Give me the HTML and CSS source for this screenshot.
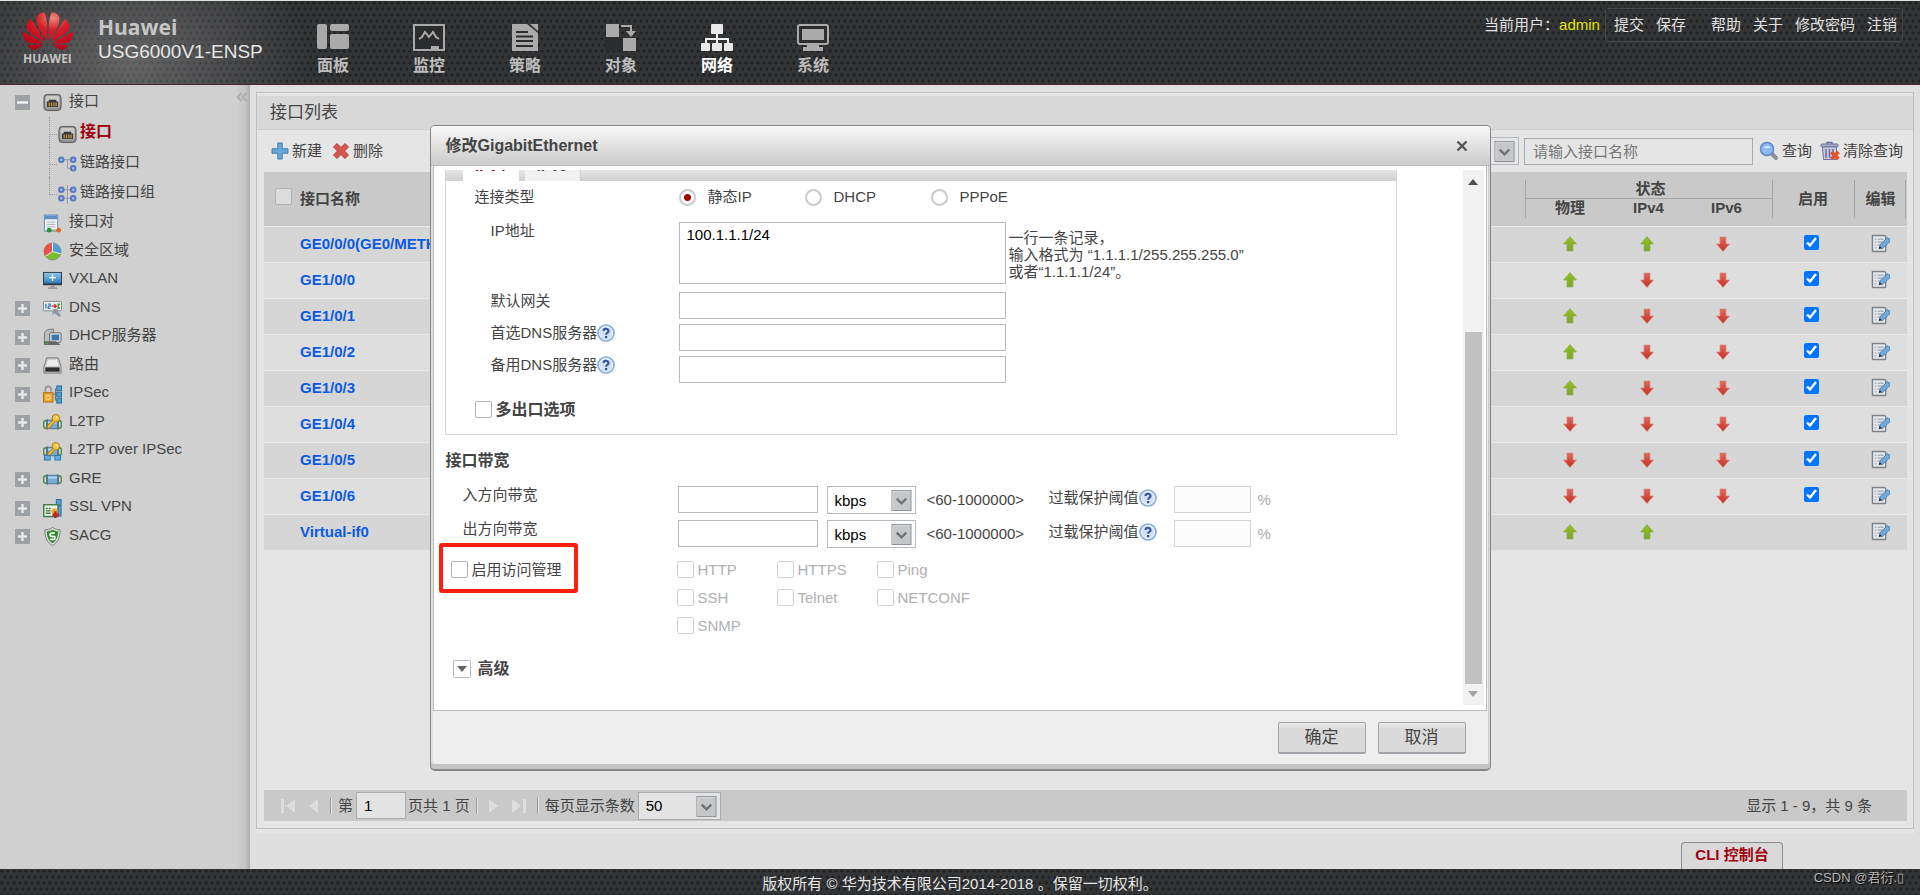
FILE: index.html
```html
<!DOCTYPE html>
<html lang="zh-CN">
<head>
<meta charset="utf-8">
<title>USG6000V1-ENSP</title>
<link rel="stylesheet" href="styles.css">
</head>
<body>
<svg class="defs" aria-hidden="true">
  <defs>
    <linearGradient id="g-blue" x1="0" y1="0" x2="0" y2="1"><stop offset="0" stop-color="#8ec3e6"/><stop offset="1" stop-color="#2f7dbb"/></linearGradient>
    <linearGradient id="g-green" x1="0" y1="0" x2="0" y2="1"><stop offset="0" stop-color="#8fc31f"/><stop offset="1" stop-color="#7aa82a"/></linearGradient>
    <linearGradient id="g-red" x1="0" y1="0" x2="0" y2="1"><stop offset="0" stop-color="#e06a5c"/><stop offset="1" stop-color="#c42f26"/></linearGradient>
    <radialGradient id="g-logo" cx=".6" cy=".15" r=".9"><stop offset="0" stop-color="#f0897a"/><stop offset=".35" stop-color="#d8202a"/><stop offset="1" stop-color="#b50016"/></radialGradient>
  </defs>
  <symbol id="i-port" viewBox="0 0 20 20"><rect x="1" y="1.500" width="18" height="17" rx="3.500" fill="#8b8b8b" stroke="#5b5b5b"/><rect x="2.500" y="3" width="15" height="13" rx="2.500" fill="#c9c9c9"/><path d="M4 15V9h2V7h8v2h2v6z" fill="#3a3835"/><path d="M6.500 10v4M9 10v4M11.500 10v4M13.800 10v4" stroke="#c9a23a" stroke-width="1.300"/></symbol>
  <symbol id="i-link" viewBox="0 0 20 20"><path d="M6 5h8M10 5v9h4" fill="none" stroke="#999"/><g fill="#a9b9e8" stroke="#5b74c4" stroke-width="2"><circle cx="3.500" cy="5" r="2.400"/><circle cx="16" cy="5" r="2.400"/><circle cx="16" cy="14" r="2.400"/></g></symbol>
  <symbol id="i-linkgroup" viewBox="0 0 20 20"><path d="M6 5h8M6 14h8M10 0v20" fill="none" stroke="#999"/><g fill="#a9b9e8" stroke="#5b74c4" stroke-width="2"><circle cx="3.500" cy="5" r="2.400"/><circle cx="16" cy="5" r="2.400"/><circle cx="3.500" cy="14" r="2.400"/><circle cx="16" cy="14" r="2.400"/></g></symbol>
  <symbol id="i-pair" viewBox="0 0 20 20"><rect x="1.500" y="1" width="14" height="17" fill="#f0f2f5" stroke="#6d8ab0"/><rect x="2" y="1.500" width="13" height="4" fill="#5f8fc9"/><path d="M4 8.500h9M4 11h9M4 13.500h9" stroke="#aab4c0"/><path d="M7 17h9" stroke="#888"/><circle cx="6.500" cy="17" r="2.500" fill="#1e9a2e"/><circle cx="16.500" cy="17" r="2.500" fill="#e0661a"/></symbol>
  <symbol id="i-zone" viewBox="0 0 20 20"><circle cx="10" cy="10" r="9" fill="#79bd2c" stroke="#777" stroke-width=".6"/><path d="M10 10V1A9 9 0 0 0 2.500 15z" fill="#e2574c"/><path d="M10 10V1a9 9 0 0 1 8.500 11.500z" fill="#4e9fd8"/><path d="M10 1v9l8.500 2.500M10 10l-7.500 5" stroke="#eee" fill="none"/></symbol>
  <symbol id="i-vxlan" viewBox="0 0 20 20"><rect y="1" width="20" height="14" fill="#2e3a44"/><rect x="1" y="2" width="18" height="11" fill="url(#g-blue)"/><path d="M10 3.500v7M6.500 7h7" stroke="#fff" stroke-width="1.300"/><path d="M8 15h4v2h3v2H5v-2h3z" fill="#999"/></symbol>
  <symbol id="i-dns" viewBox="0 0 20 20"><rect x=".5" y="2.500" width="19" height="10" rx="1" fill="#e8e8e8" stroke="#888"/><path d="M3 5v5M5.500 5.500h2v2h-2v2.300h2.500" stroke="#2f7dbb" fill="none" stroke-width="1.300"/><path d="M9 7.500h5M12 5.500l2 2-2 2" stroke="#d22" fill="none" stroke-width="1.300"/><path d="M18 5.500h-2v4h2" stroke="#2a9a3a" fill="none" stroke-width="1.500"/><path d="M10 11l6-1-1 2 4 5-2 2-5-4-2 2z" fill="#8e98a6"/></symbol>
  <symbol id="i-dhcp" viewBox="0 0 20 20"><path d="M4 2l7-1v16H1.500V5z" fill="#bdbdbd" stroke="#777"/><rect x="7" y="5" width="12" height="10" rx="1" fill="#dcdcdc" stroke="#666"/><rect x="9" y="7" width="8" height="6" fill="#3a78b0"/><path d="M1 14h12l5 3v1H1z" fill="#666"/><circle cx="4" cy="16" r="1" fill="#4db33d"/></symbol>
  <symbol id="i-route" viewBox="0 0 20 20"><path d="M4 2h12l3 9v7H1v-7z" fill="#c9c9c9" stroke="#777"/><path d="M5.500 4h9l2 6.500h-13z" fill="#ededed"/><rect x="2.500" y="12" width="15" height="4.500" fill="#2e2e2e"/></symbol>
  <symbol id="i-ipsec" viewBox="0 0 20 20"><path d="M2.500 8V4.500a3 3 0 0 1 6 0V8" fill="none" stroke="#999" stroke-width="1.800"/><rect x=".5" y="8" width="10" height="10" fill="#e9a52c" stroke="#b3741a"/><path d="M3.500 11h4v4h-4z" fill="none" stroke="#fbe2a0"/><path d="M11 9.500h4M13 4v12M13 4h2M13 16h2" stroke="#666" fill="none"/><g fill="#4fa3d9" stroke="#286c9e"><rect x="14.500" y="1" width="5" height="5"/><rect x="14.500" y="7.500" width="5" height="5"/><rect x="14.500" y="14" width="5" height="5"/></g></symbol>
  <symbol id="i-gre" viewBox="0 0 20 20"><ellipse cx="2.500" cy="10" rx="2" ry="4" fill="none" stroke="#4b8f43" stroke-width="1.600"/><ellipse cx="17.500" cy="10" rx="2" ry="4" fill="none" stroke="#4b8f43" stroke-width="1.600"/><rect x="4" y="5.500" width="12" height="9" fill="#79acdb" stroke="#4c6f96"/><path d="M5 8h10" stroke="#b5d5f0" stroke-width="2"/><path d="M4.500 4.500v11M15.500 4.500v11" stroke="#56636e"/></symbol>
  <symbol id="i-key" viewBox="0 0 20 20"><circle cx="13.500" cy="5.500" r="4" fill="#f3c344" stroke="#a97a17"/><circle cx="14.500" cy="4.500" r="1.200" fill="#fff2bd"/><path d="M10.500 7.500l-6 6v2.500h2.500l1-2 1.500-.5.500-2 2.500-2.200" fill="#eeb932" stroke="#a97a17"/></symbol>
  <symbol id="i-l2tp" viewBox="0 0 20 20"><use href="#i-gre" y="2"/><use href="#i-key"/></symbol>
  <symbol id="i-l2ip" viewBox="0 0 20 20"><use href="#i-gre"/><use href="#i-key" y="-1"/><rect x="1.500" y="14" width="6" height="5" fill="#5fb0e0" stroke="#2b76a8"/><rect x="12.500" y="14" width="6" height="5" fill="#5fb0e0" stroke="#2b76a8"/></symbol>
  <symbol id="i-ssl" viewBox="0 0 20 20"><g fill="#4fa3d9" stroke="#286c9e"><rect x="14" y=".5" width="5" height="6"/><rect x="14" y="7" width="5" height="11"/></g><rect x=".8" y="6" width="15" height="12.500" fill="#e9efe2" stroke="#3e7c4b" stroke-width="1.500"/><path d="M3 10h2M6 10h2M3 12.500h5M3 15h5" stroke="#3e7c4b" stroke-width="1.500"/><circle cx="12" cy="13" r="3.200" fill="#f2a83a"/><path d="M13 13v7M10 16.500h7" stroke="#c91f1f" stroke-width="2.600"/></symbol>
  <symbol id="i-sacg" viewBox="0 0 20 20"><path d="M10 .5C7 2.500 4.500 3 2 3c0 8 2 13 8 16.500C16 16 18 11 18 3c-2.500 0-5-.5-8-2.500z" fill="#dcdcdc" stroke="#777"/><path d="M10 3C8 4.200 6 4.600 4 4.700c.2 6 2 9.800 6 12.300 4-2.500 5.800-6.300 6-12.300C14 4.600 12 4.200 10 3z" fill="#2f8a2a"/><path d="M12.500 6.500H9a1.600 1.600 0 0 0 0 3.300h2a1.600 1.600 0 0 1 0 3.300H7.500" fill="none" stroke="#fff" stroke-width="1.800"/></symbol>
  <symbol id="i-up" viewBox="0 0 14 16"><path d="M7 .5L13.500 8H10v7H4V8H.5z" fill="url(#g-green)" stroke="#8fae57" stroke-width=".7"/></symbol>
  <symbol id="i-down" viewBox="0 0 14 16"><path d="M7 15.500L13.500 8H10V1H4v7H.5z" fill="url(#g-red)" stroke="#d98a82" stroke-width=".7"/></symbol>
  <symbol id="i-edit" viewBox="0 0 20 20"><path d="M1.500 1.500h12q2 0 2 2v14q0 1-1 1h-12q-1 0-1-1z" fill="#e4e7ea" stroke="#7d838b" stroke-width="1.500"/><path d="M4 5.500h1.500M7 5.500h6M4 8.500h1.500M7 8.500h5M4 11.500h1.500M7 11.500h3M4 14.500h1.500" stroke="#8d949c"/><path d="M8.500 15l1.500-4.500L17 4l3 1.500v2.500L12 15.500z" fill="#6fa9db" stroke="#44759f" stroke-width=".8"/><path d="M8 16l1.200-3.500 2.300 2.300z" fill="#333"/></symbol>
  <symbol id="i-add" viewBox="0 0 18 18"><path d="M6.800 1h4.400v5.800H17v4.400h-5.800V17H6.800v-5.800H1V6.800h5.800z" fill="#6aa7d6" stroke="#3f7fb3"/></symbol>
  <symbol id="i-del" viewBox="0 0 18 18"><path d="M5 1.500l4 4 4-4 3.500 3.500-4 4 4 4-3.500 3.500-4-4-4 4L1.500 13l4-4-4-4z" fill="#d9534f" stroke="#a84440" stroke-linejoin="round"/></symbol>
  <symbol id="i-search" viewBox="0 0 20 20"><path d="M12 12l5 5" stroke="#8d9096" stroke-width="4" stroke-linecap="round"/><circle cx="8" cy="8" r="6.500" fill="#8fb9f3" stroke="#5b87c6" stroke-width="1.500"/><path d="M4.500 7a4 4 0 0 1 7 0z" fill="#dcebff"/></symbol>
  <symbol id="i-trash" viewBox="0 0 20 20"><path d="M7 3V1.500h5V3" fill="none" stroke="#6c7298" stroke-width="1.500"/><rect x="1" y="3" width="17" height="3" rx="1" fill="#a9adca" stroke="#6c7298"/><path d="M2.500 6h14v12.500h-13z" fill="#c9cce0" stroke="#6c7298"/><path d="M6 8v9M9.500 8v9M13 8v9" stroke="#6c7298" stroke-width="1.500"/><path d="M11.500 11l7 7M18.500 11l-7 7" stroke="#e0532d" stroke-width="3.600"/></symbol>
  <symbol id="i-chev" viewBox="0 0 21 22"><rect x=".5" y=".5" width="20" height="21" fill="#c6c7c9" stroke="#8d9299"/><path d="M1.500 20.500v-19h18" fill="none" stroke="#d6d7d9"/><path d="M5.500 9l5 5 5-5" fill="none" stroke="#6e7277" stroke-width="2.400"/></symbol>
  <symbol id="i-help" viewBox="0 0 18 18"><circle cx="9" cy="9" r="8" fill="#d3deee" stroke="#86aee0" stroke-width="1.700"/><circle cx="9" cy="9" r="6.500" fill="none" stroke="#f5f8fc"/><path d="M6.500 7a2.500 2.200 0 1 1 3.700 1.900Q9.100 9.500 9.100 10.800" fill="none" stroke="#30569e" stroke-width="2"/><rect x="8" y="12" width="2.200" height="2.200" fill="#30569e"/></symbol>
  <symbol id="i-plus" viewBox="0 0 15 15"><rect width="15" height="15" fill="#9da0a4"/><path d="M7.500 3v9M3 7.500h9" stroke="#e8e8e8" stroke-width="2.400"/></symbol>
  <symbol id="i-minus" viewBox="0 0 15 15"><rect width="15" height="15" fill="#9da0a4"/><path d="M2 7.500h11" stroke="#f2f2f2" stroke-width="2.400"/></symbol>
</svg>

<header class="top">
  <div class="logo">
    <svg viewBox="0 2.900 24 18.200" width="50" height="40"><path fill="url(#g-logo)" d="M3.670 6.140S1.820 7.910 1.720 9.780v.35c.08 1.510 1.220 2.400 1.220 2.400 1.830 1.790 6.260 4.040 7.300 4.550 0 0 .06.03.1-.01l.02-.04v-.04C7.520 10.800 3.670 6.140 3.670 6.140zM9.650 18.600c-.02-.08-.1-.08-.1-.08l-7.380.26c.8 1.430 2.150 2.530 3.560 2.200.96-.25 3.160-1.780 3.880-2.300.06-.05.04-.09.04-.09zm.08-.78C6.490 15.630.21 12.280.21 12.280c-.15.46-.2.9-.21 1.300v.07c0 1.070.4 1.820.4 1.820.8 1.690 2.340 2.200 2.340 2.200.7.3 1.400.31 1.400.31.12.02 4.400 0 5.540 0 .05 0 .08-.05.08-.05v-.06c0-.03-.03-.05-.03-.05zM9.060 3.190a3.420 3.420 0 00-2.570 3.150v.41c.03.6.16 1.050.16 1.050.66 2.900 3.860 7.650 4.550 8.650.05.05.1.03.1.03a.1.1 0 00.06-.1c1.060-10.600-1.110-13.420-1.110-13.420-.32.02-1.190.23-1.190.23zm8.299 2.270s-.49-1.800-2.440-2.280c0 0-.57-.14-1.170-.22 0 0-2.180 2.810-1.120 13.430.01.07.06.08.06.08.07.03.1-.03.1-.03.72-1.030 3.900-5.760 4.550-8.640 0 0 .36-1.400.02-2.340zm-2.920 13.070s-.07 0-.09.05c0 0-.01.07.03.1.7.51 2.850 2 3.880 2.300 0 0 .16.05.43.06h.14c.69-.02 1.900-.37 3-2.260l-7.400-.25zm7.830-8.410c.14-2.060-1.940-3.970-1.940-3.980 0 0-3.850 4.660-6.670 10.800 0 0-.03.08.02.13l.04.01h.06c1.060-.53 5.460-2.770 7.280-4.540 0 0 1.150-.93 1.210-2.420zm1.520 2.140s-6.280 3.370-9.520 5.550c0 0-.05.04-.03.11 0 0 .03.06.07.06 1.160 0 5.560 0 5.670-.02 0 0 .57-.02 1.270-.29 0 0 1.560-.5 2.370-2.270 0 0 .73-1.450.17-3.140z"/></svg>
    <span class="logo-word">HUAWEI</span>
  </div>
  <div class="product"><strong>Huawei</strong><span>USG6000V1-ENSP</span></div>
  <nav class="nav">
    <a href="#"><svg width="32" height="28" viewBox="0 0 32 28"><rect y="0" width="10" height="25" rx="2"/><rect x="13" y="0" width="19" height="7" rx="2"/><rect x="13" y="10" width="19" height="15" rx="2"/></svg>面板</a>
    <a href="#"><svg width="32" height="28" viewBox="0 0 32 28"><rect x="1" y="1" width="30" height="25" fill="#2b2c2d" stroke="#aaa" stroke-width="2"/><path d="M6 15l3-2 3-5 4 5 4-5 3 5 3 2" fill="none" stroke="#aaa" stroke-width="2"/><path d="M18 25v-3h8v3z"/></svg>监控</a>
    <a href="#"><svg width="32" height="28" viewBox="0 0 32 28"><path d="M3 0h15l11 9v18H3z"/><path d="M21 0h8v7z"/><path d="M7 8h12M7 12.500h17M7 17h17M7 22h17" stroke="#2b2c2d" stroke-width="2"/></svg>策略</a>
    <a href="#"><svg width="32" height="28" viewBox="0 0 32 28"><path d="M0 13h18v14H0z" fill="#2b2c2d"/><rect x="1" y="0" width="13" height="13"/><rect x="18" y="14" width="13" height="13"/><path d="M16 2h10v6" fill="none" stroke="#aaa" stroke-width="2"/><path d="M21 7h10l-5 6z"/></svg>对象</a>
    <a href="#" class="on"><svg width="32" height="28" viewBox="0 0 32 28"><rect x="10" y="0" width="12" height="10" rx="1"/><path d="M16 10v10M5 20v-5h22v5" fill="none" stroke="#eee" stroke-width="2"/><rect y="19" width="9" height="8" rx="1"/><rect x="11" y="19" width="10" height="8" rx="1"/><rect x="23" y="19" width="9" height="8" rx="1"/></svg>网络</a>
    <a href="#"><svg width="32" height="28" viewBox="0 0 32 28"><rect x="1" y="1" width="30" height="19" rx="2" fill="#2b2c2d" stroke="#aaa" stroke-width="2"/><rect x="5" y="5" width="22" height="11"/><path d="M10 20h12v3h4v4H6v-4h4z"/></svg>系统</a>
  </nav>
  <div class="user">
    <span>当前用户：<b>admin</b></span>
    <div class="user-links"><a href="#">提交</a><a href="#">保存</a><a href="#" class="split">帮助</a><a href="#">关于</a><a href="#">修改密码</a><a href="#">注销</a></div>
  </div>
</header>

<main class="page">
  <aside class="side">
    <button class="collapse" aria-label="收起"><svg width="12" height="10" viewBox="0 0 12 10"><path d="M5.500 1l-4 4 4 4M10.500 1l-4 4 4 4" fill="none" stroke="#adadad" stroke-width="2"/></svg></button>
    <ul class="tree">
      <li class="first"><a href="#"><svg class="tog"><use href="#i-minus"/></svg><svg class="ico"><use href="#i-port"/></svg>接口</a>
        <ul>
          <li class="on"><a href="#"><svg class="ico"><use href="#i-port"/></svg>接口</a></li>
          <li><a href="#"><svg class="ico"><use href="#i-link"/></svg>链路接口</a></li>
          <li><a href="#"><svg class="ico"><use href="#i-linkgroup"/></svg>链路接口组</a></li>
        </ul></li>
      <li><a href="#"><i class="tog"></i><svg class="ico"><use href="#i-pair"/></svg>接口对</a></li>
      <li><a href="#"><i class="tog"></i><svg class="ico"><use href="#i-zone"/></svg>安全区域</a></li>
      <li><a href="#"><i class="tog"></i><svg class="ico"><use href="#i-vxlan"/></svg>VXLAN</a></li>
      <li><a href="#"><svg class="tog"><use href="#i-plus"/></svg><svg class="ico"><use href="#i-dns"/></svg>DNS</a></li>
      <li><a href="#"><svg class="tog"><use href="#i-plus"/></svg><svg class="ico"><use href="#i-dhcp"/></svg>DHCP服务器</a></li>
      <li><a href="#"><svg class="tog"><use href="#i-plus"/></svg><svg class="ico"><use href="#i-route"/></svg>路由</a></li>
      <li><a href="#"><svg class="tog"><use href="#i-plus"/></svg><svg class="ico"><use href="#i-ipsec"/></svg>IPSec</a></li>
      <li><a href="#"><svg class="tog"><use href="#i-plus"/></svg><svg class="ico"><use href="#i-l2tp"/></svg>L2TP</a></li>
      <li><a href="#"><i class="tog"></i><svg class="ico"><use href="#i-l2ip"/></svg>L2TP over IPSec</a></li>
      <li><a href="#"><svg class="tog"><use href="#i-plus"/></svg><svg class="ico"><use href="#i-gre"/></svg>GRE</a></li>
      <li><a href="#"><svg class="tog"><use href="#i-plus"/></svg><svg class="ico"><use href="#i-ssl"/></svg>SSL VPN</a></li>
      <li><a href="#"><svg class="tog"><use href="#i-plus"/></svg><svg class="ico"><use href="#i-sacg"/></svg>SACG</a></li>
    </ul>
  </aside>

  <div class="content">
    <section class="panel">
      <h1>接口列表</h1>
      <div class="tools">
        <button class="tool wide-gap"><svg width="18" height="18"><use href="#i-add"/></svg>新建</button>
        <button class="tool"><svg width="18" height="18"><use href="#i-del"/></svg>删除</button>
        <span class="combo field"><select aria-label="查询条件"><option>接口名称</option></select><svg><use href="#i-chev"/></svg></span>
        <input class="query" type="text" placeholder="请输入接口名称" aria-label="接口名称">
        <button class="tool"><svg width="20" height="20"><use href="#i-search"/></svg>查询</button>
        <button class="tool"><svg width="20" height="20"><use href="#i-trash"/></svg>清除查询</button>
      </div>
      <div class="tablebox">
      <table>
        <colgroup><col class="c-check"><col><col class="c-phy"><col class="c-v4"><col class="c-v6"><col class="c-on"><col class="c-edit"></colgroup>
        <thead>
          <tr><th rowspan="2" class="ck"><input type="checkbox" class="box" aria-label="全选"></th><th rowspan="2" class="name">接口名称</th><th colspan="3" class="group">状态</th><th rowspan="2" class="bar">启用</th><th rowspan="2" class="bar end">编辑</th></tr>
          <tr class="subs"><th class="phy bar-low">物理</th><th class="v4">IPv4</th><th class="v6">IPv6</th></tr>
        </thead>
        <tbody>
          <tr><td></td><td class="name"><a href="#">GE0/0/0(GE0/METH)</a></td><td class="phy"><svg class="ar"><use href="#i-up"/></svg></td><td><svg class="ar"><use href="#i-up"/></svg></td><td class="v6"><svg class="ar"><use href="#i-down"/></svg></td><td class="tick"><input type="checkbox" checked aria-label="启用"></td><td><svg class="ed"><use href="#i-edit"/></svg></td></tr>
          <tr><td></td><td class="name"><a href="#">GE1/0/0</a></td><td class="phy"><svg class="ar"><use href="#i-up"/></svg></td><td><svg class="ar"><use href="#i-down"/></svg></td><td class="v6"><svg class="ar"><use href="#i-down"/></svg></td><td class="tick"><input type="checkbox" checked aria-label="启用"></td><td><svg class="ed"><use href="#i-edit"/></svg></td></tr>
          <tr><td></td><td class="name"><a href="#">GE1/0/1</a></td><td class="phy"><svg class="ar"><use href="#i-up"/></svg></td><td><svg class="ar"><use href="#i-down"/></svg></td><td class="v6"><svg class="ar"><use href="#i-down"/></svg></td><td class="tick"><input type="checkbox" checked aria-label="启用"></td><td><svg class="ed"><use href="#i-edit"/></svg></td></tr>
          <tr><td></td><td class="name"><a href="#">GE1/0/2</a></td><td class="phy"><svg class="ar"><use href="#i-up"/></svg></td><td><svg class="ar"><use href="#i-down"/></svg></td><td class="v6"><svg class="ar"><use href="#i-down"/></svg></td><td class="tick"><input type="checkbox" checked aria-label="启用"></td><td><svg class="ed"><use href="#i-edit"/></svg></td></tr>
          <tr><td></td><td class="name"><a href="#">GE1/0/3</a></td><td class="phy"><svg class="ar"><use href="#i-up"/></svg></td><td><svg class="ar"><use href="#i-down"/></svg></td><td class="v6"><svg class="ar"><use href="#i-down"/></svg></td><td class="tick"><input type="checkbox" checked aria-label="启用"></td><td><svg class="ed"><use href="#i-edit"/></svg></td></tr>
          <tr><td></td><td class="name"><a href="#">GE1/0/4</a></td><td class="phy"><svg class="ar"><use href="#i-down"/></svg></td><td><svg class="ar"><use href="#i-down"/></svg></td><td class="v6"><svg class="ar"><use href="#i-down"/></svg></td><td class="tick"><input type="checkbox" checked aria-label="启用"></td><td><svg class="ed"><use href="#i-edit"/></svg></td></tr>
          <tr><td></td><td class="name"><a href="#">GE1/0/5</a></td><td class="phy"><svg class="ar"><use href="#i-down"/></svg></td><td><svg class="ar"><use href="#i-down"/></svg></td><td class="v6"><svg class="ar"><use href="#i-down"/></svg></td><td class="tick"><input type="checkbox" checked aria-label="启用"></td><td><svg class="ed"><use href="#i-edit"/></svg></td></tr>
          <tr><td></td><td class="name"><a href="#">GE1/0/6</a></td><td class="phy"><svg class="ar"><use href="#i-down"/></svg></td><td><svg class="ar"><use href="#i-down"/></svg></td><td class="v6"><svg class="ar"><use href="#i-down"/></svg></td><td class="tick"><input type="checkbox" checked aria-label="启用"></td><td><svg class="ed"><use href="#i-edit"/></svg></td></tr>
          <tr><td></td><td class="name"><a href="#">Virtual-if0</a></td><td class="phy"><svg class="ar"><use href="#i-up"/></svg></td><td><svg class="ar"><use href="#i-up"/></svg></td><td class="v6"></td><td></td><td><svg class="ed"><use href="#i-edit"/></svg></td></tr>
        </tbody>
      </table>
      </div>
      <div class="pager">
        <button class="pg" aria-label="首页"><svg width="16" height="16" viewBox="0 0 16 16"><path d="M1 1h3v14H1zM15 1v14L6 8z"/></svg></button>
        <button class="pg" aria-label="上一页"><svg width="10" height="16" viewBox="0 0 10 16"><path d="M10 1v14L1 8z"/></svg></button>
        <i class="sep"></i>
        <label for="pageno">第</label><input id="pageno" type="text" value="1"><span class="pages">页共 1 页</span>
        <i class="sep"></i>
        <button class="pg" aria-label="下一页"><svg width="10" height="16" viewBox="0 0 10 16"><path d="M0 1v14l9-7z"/></svg></button>
        <button class="pg" aria-label="末页"><svg width="16" height="16" viewBox="0 0 16 16"><path d="M12 1h3v14h-3zM1 1v14l9-7z"/></svg></button>
        <i class="sep"></i>
        <label for="size">每页显示条数</label>
        <span class="combo size"><select id="size"><option>50</option></select><svg><use href="#i-chev"/></svg></span>
        <span class="total">显示 1 - 9，共 9 条</span>
      </div>
    </section>
    <button class="cli">CLI 控制台</button>
  </div>
</main>

<footer class="foot">版权所有 © 华为技术有限公司2014-2018 。保留一切权利。<span class="mark">CSDN @君衍.▯</span></footer>

<div class="overlay">
  <div class="dialog" role="dialog" aria-labelledby="dlg">
    <div class="dlg-head"><h2 id="dlg">修改GigabitEthernet</h2><button class="close" aria-label="关闭"><svg width="12" height="12" viewBox="0 0 12 12"><path d="M1.500 1.500l9 9M10.500 1.500l-9 9" stroke="#555" stroke-width="2.400"/></svg></button></div>
    <div class="dlg-body">
      <form class="form">
        <div class="tabpanel">
          <div class="tabs"><button type="button" class="tab on">IPv4</button><button type="button" class="tab">IPv6</button></div>
          <div class="rows">
            <div class="row type"><span class="lab">连接类型</span><label class="rad"><input type="radio" name="t" checked>静态IP</label><label class="rad"><input type="radio" name="t">DHCP</label><label class="rad"><input type="radio" name="t">PPPoE</label></div>
            <div class="row ip"><label class="lab in" for="ip">IP地址</label><textarea id="ip">100.1.1.1/24</textarea><p>一行一条记录，<br>输入格式为 “1.1.1.1/255.255.255.0”<br>或者“1.1.1.1/24”。</p></div>
            <div class="row"><label class="lab in" for="gw">默认网关</label><input class="wide" id="gw" type="text"></div>
            <div class="row"><label class="lab in" for="d1">首选DNS服务器<svg class="help"><use href="#i-help"/></svg></label><input class="wide" id="d1" type="text"></div>
            <div class="row"><label class="lab in" for="d2">备用DNS服务器<svg class="help"><use href="#i-help"/></svg></label><input class="wide" id="d2" type="text"></div>
            <label class="multi"><input type="checkbox" class="box">多出口选项</label>
          </div>
        </div>
        <h3>接口带宽</h3>
        <div class="band"><label class="blab" for="bi">入方向带宽</label><input id="bi" type="text"><span class="combo unit"><select aria-label="入方向单位"><option>kbps</option></select><svg><use href="#i-chev"/></svg></span><span class="range">&lt;60-1000000&gt;</span><label class="over" for="oi">过载保护阈值<svg class="help"><use href="#i-help"/></svg></label><input class="pct" id="oi" type="text" disabled><span class="sign">%</span></div>
        <div class="band"><label class="blab" for="bo">出方向带宽</label><input id="bo" type="text"><span class="combo unit"><select aria-label="出方向单位"><option>kbps</option></select><svg><use href="#i-chev"/></svg></span><span class="range">&lt;60-1000000&gt;</span><label class="over" for="oo">过载保护阈值<svg class="help"><use href="#i-help"/></svg></label><input class="pct" id="oo" type="text" disabled><span class="sign">%</span></div>
        <div class="access">
          <label class="acc-main"><input type="checkbox" class="box">启用访问管理</label>
          <div class="acc-list">
            <label><input type="checkbox" class="box" disabled>HTTP</label><label><input type="checkbox" class="box" disabled>HTTPS</label><label><input type="checkbox" class="box" disabled>Ping</label>
            <label><input type="checkbox" class="box" disabled>SSH</label><label><input type="checkbox" class="box" disabled>Telnet</label><label><input type="checkbox" class="box" disabled>NETCONF</label>
            <label><input type="checkbox" class="box" disabled>SNMP</label>
          </div>
        </div>
        <button type="button" class="adv"><svg width="18" height="18" viewBox="0 0 18 18"><rect x=".5" y=".5" width="17" height="17" rx="1" fill="#fff" stroke="#b5b8bf"/><path d="M4 6h10l-5 6z" fill="#666"/></svg>高级</button>
      </form>
      <div class="scroll" aria-hidden="true"><svg width="10" height="6" viewBox="0 0 10 6"><path d="M0 6l5-6 5 6z" fill="#505050"/></svg><i></i><svg width="10" height="6" viewBox="0 0 10 6"><path d="M0 0l5 6 5-6z" fill="#a3a3a3"/></svg></div>
    </div>
    <div class="dlg-foot"><button>确定</button><button>取消</button></div>
  </div>
</div>
</body>
</html>
```
FILE: styles.css
```css
*, *::before, *::after { box-sizing: border-box; }
body {
  margin: 0;
  min-height: 100vh;
  display: flex;
  flex-direction: column;
  background: #dfdfdf;
  color: #444;
  font: 15px/18px "Liberation Sans", "Noto Sans CJK SC", sans-serif;
}
button, input, select, textarea { font: inherit; color: inherit; margin: 0; padding: 0; }
button { background: none; border: 0; cursor: pointer; }
a { color: inherit; text-decoration: none; }
svg { display: block; flex: none; }
ul { list-style: none; margin: 0; padding: 0; }
.defs { position: absolute; width: 0; height: 0; }

/* header */
.top, .foot {
  background-color: #333436;
  background-image:
    radial-gradient(circle at 2px 2px, #202122 1px, transparent 2px),
    radial-gradient(circle at 5px 8px, #202122 1px, transparent 2px);
  background-size: 6px 12px;
}
.top {
  height: 85px;
  flex: none;
  display: flex;
  border-top: 1px solid #dfe3e0;
  border-bottom: 1px solid #4b2426;
  background-image:
    radial-gradient(ellipse 180px 130px at 130px 60px, rgba(150, 150, 150, .5), rgba(120, 120, 120, 0)),
    radial-gradient(circle at 2px 2px, #202122 1px, transparent 2px),
    radial-gradient(circle at 5px 8px, #202122 1px, transparent 2px);
  background-size: auto, 6px 12px, 6px 12px;
}
.logo { width: 98px; padding: 10px 0 0 23px; }
.logo-word { display: block; margin-top: 1px; font: bold 12px/14px "Open Sans", sans-serif; color: #c4c4c4; }
.product { width: 187px; padding-top: 13px; display: flex; flex-direction: column; white-space: nowrap; }
.product strong { font: bold 21px/26px "Open Sans", sans-serif; color: #c6c6c6; }
.product span { font-size: 19px; line-height: 24px; color: #e6e6e6; }
.nav { display: flex; }
.nav a {
  width: 96px;
  padding-top: 23px;
  display: flex;
  flex-direction: column;
  align-items: center;
  gap: 4px;
  font-size: 16px;
  line-height: 20px;
  font-weight: bold;
  color: #bdbdbd;
}
.nav svg { fill: #aaa; }
.nav .on { color: #fff; }
.nav .on svg { fill: #e8e8e8; }
.user { margin: 7px 17px 0 auto; height: 34px; display: flex; align-items: center; gap: 5px; color: #e0e0e0; }
.user b { font-weight: normal; color: #e6e600; }
.user-links { height: 34px; padding: 0 5px 0 8px; display: flex; align-items: center; gap: 12px; border: 1px solid #454648; border-radius: 3px; }
.split { margin-left: 13px; }

/* page */
.page { flex: 1; display: flex; }
.side {
  position: relative;
  width: 250px;
  flex: none;
  background: linear-gradient(to right, #d0d0d0 236px, #c6c6c6 245px, #adadad);
}
.collapse { position: absolute; right: 2px; top: 7px; }
.tree > li { height: 28px; line-height: 28px; }
.tree > li:nth-child(odd) { height: 29px; line-height: 29px; }
.tree > li.first { height: auto; line-height: 32px; }
.tree a { display: flex; padding-left: 15px; align-items: center; }
.tree > .first > a { height: 31px; }
.tree svg, .tree .tog { margin-top: 4px; }
.tree .tog { width: 15px; height: 15px; margin-right: 13px; }
.tree .ico { width: 19px; height: 19px; margin-right: 7px; }
.tree ul { margin-left: 49px; padding-top: 1px; }
.tree ul li { position: relative; height: 30px; line-height: 30px; }
.tree ul li::before { content: ""; position: absolute; left: 0; top: 0; height: 30px; border-left: 1px dotted #999; }
.tree ul li:last-child::before { height: 18px; }
.tree ul li::after { content: ""; position: absolute; left: 0; top: 17px; width: 8px; border-top: 1px dotted #999; }
.tree ul a { padding-left: 9px; }
.tree ul .ico { margin-right: 3px; }
.tree .on { font-size: 16px; font-weight: bold; color: #a0000f; }

.content { flex: 1; min-width: 0; padding: 7px 6px 0; display: flex; flex-direction: column; }
.panel {
  flex: 1;
  display: flex;
  flex-direction: column;
  border: 1px solid #bebfc1;
  box-shadow: 0 5px 0 #e5e5e5;
  background: #e5e5e5;
  padding: 3px 0 7px;
}
.panel h1 { margin: 0; padding: 0 13px; height: 34px; font-size: 17px; line-height: 34px; font-weight: normal; background: #d8d8d8; border-bottom: 1px solid #d0d0d0; }
.tools { height: 42px; padding: 0 10px 0 14px; display: flex; align-items: center; }
.tool { display: flex; align-items: center; gap: 3px; margin-right: 8px; white-space: nowrap; }
.wide-gap { margin-right: 10px; }
.tool:last-child { margin-right: 0; }
.combo { position: relative; display: block; border: 1px solid #b5b8bf; height: 28px; }
.combo select { appearance: none; width: 100%; height: 100%; padding-left: 7px; border: 0; background: none; color: #000; }
.combo svg { position: absolute; right: 3px; top: 3px; width: 21px; height: 21px; pointer-events: none; }
.field { width: 180px; margin: 0 5px 0 auto; }
.query { width: 229px; height: 27px; padding: 0 8px; margin-right: 6px; border: 1px solid #a9abae; background: none; }
.query::placeholder { color: #777; }

.tablebox { flex: 1; padding: 0 6px 0 7px; }
table { width: 100%; table-layout: fixed; border-collapse: separate; border-spacing: 0; }
.c-check { width: 36px; }
.c-phy { width: 84px; }
.c-v4 { width: 76px; }
.c-v6 { width: 87px; }
.c-on { width: 82px; }
.c-edit { width: 53px; }
th { padding: 0; height: 27px; background: #c9c9c9 no-repeat; line-height: 18px; }
td { padding: 0 0 2px; height: 36px; border-top: 1px solid #eaeaea; text-align: center; }
td svg, td input { margin: 0 auto; display: block; }
td input { width: 15px; height: 15px; accent-color: #0075ff; }
.tick { padding: 0 4px 5px 0; }
tbody tr { background: #dedede; }
tbody tr:nth-child(odd) { background: #d6d6d6; }
.name { text-align: left; }
td.name { font-weight: bold; color: #0a5be0; }
.ck { vertical-align: top; padding: 16px 0 0 11px; text-align: left; }
.ck .box { background: #dcdcdc; display: block; }
.group { background-image: linear-gradient(#a6a6a6, #a6a6a6), linear-gradient(#a6a6a6, #a6a6a6); background-position: left 0 top 8px, left 0 top 26px; background-size: 1px 19px, 100% 1px; padding: 7px 0 0 4px; }
.subs th { vertical-align: top; }
.bar-low { background-image: linear-gradient(#a6a6a6, #a6a6a6); background-size: 1px 19px; }
.bar { background-image: linear-gradient(#a6a6a6, #a6a6a6); background-position: 0 8px; background-size: 1px 38px; }
.end { background-image: linear-gradient(#a6a6a6, #a6a6a6), linear-gradient(#a6a6a6, #a6a6a6); background-position: 0 8px, right 1px top 8px; background-size: 1px 38px; }
.phy { padding-left: 6px; }
td.v6 { padding-right: 10px; }
th.v4 { padding-left: 3px; }
th.v6 { padding-right: 4px; }
.ar { width: 14px; height: 16px; }
.ed { width: 19px; height: 19px; }

.pager { height: 31px; margin: 0 6px 0 7px; padding: 0 35px 0 16px; display: flex; align-items: center; background: #c9c9c9; white-space: nowrap; }
.pg { margin-right: 12px; }
.pg svg { fill: #dedede; }
.pager .sep { width: 2px; height: 16px; margin-right: 6px; border-left: 1px solid #999; border-right: 1px solid #e5e5e5; }
.pager input { width: 50px; height: 27px; margin: 0 2px 0 3px; padding-left: 7px; border: 1px solid #a9abae; background: #e3e3e3; color: #000; }
.pages { margin-right: 6px; }
.pager .pages + .sep { margin-right: 11px; }
.sep + .pg + .pg { margin-right: 10px; }
.size { width: 83px; margin-left: 3px; background: #e3e3e3; border-color: #a9abae; }
.total { margin-left: auto; }
.cli {
  align-self: flex-end;
  width: 102px;
  height: 27px;
  margin: 13px 131px 0 0;
  padding-bottom: 3px;
  border: 1px solid #8d8d8d;
  border-bottom: 0;
  border-radius: 4px 4px 0 0;
  background: #d9d9d9;
  color: #a0000f;
  font-weight: bold;
}
.foot { position: relative; height: 26px; flex: none; text-align: center; line-height: 30px; color: #e6e6e6; overflow: hidden; }
.mark { position: absolute; right: 16px; top: -6px; font-size: 13px; color: #b5b5b5; text-shadow: 1px 1px 1px #000; }

/* dialog */
.overlay { position: fixed; inset: 0; padding-top: 1px; display: flex; align-items: center; justify-content: center; }
.dialog {
  width: 1061px;
  max-width: 96vw;
  border: 1px solid #858585;
  border-bottom-width: 2px;
  border-radius: 5px;
  background: #eee;
  box-shadow: inset 0 -5px 0 #c4c4c4, inset -2px 0 0 #d2d2d2, inset 2px 0 0 #e0e0e0;
  overflow: hidden;
}
.dlg-head { height: 40px; padding: 0 22px 0 15px; display: flex; align-items: center; justify-content: space-between; background: linear-gradient(#f9f9f9, #cfcfcf 90%); border-bottom: 1px solid #bbb; }
.dlg-head h2 { margin: 0; font-size: 16px; line-height: 20px; }
.dlg-body { display: flex; margin: 0 3px 0 2px; padding: 4px 2px 5px 0; background: #fff; border: 1px solid #bcbcbc; border-top: 0; }
.form { flex: 1; min-width: 0; overflow: hidden; padding: 0 66px 27px 11px; }
.tabpanel { border: 1px solid #d5d5d5; border-top: 0; }
.tabs { display: flex; height: 30px; margin-top: -19px; padding-left: 17px; gap: 6px; background: linear-gradient(#e8e8e8 60%, #cfcfcf); }
.tab { width: 56px; height: 30px; background: #f1f1f1; font-weight: bold; line-height: 26px; border-right: 1px solid #ccc; }
.tab.on { background: #fff; color: #a0000f; border: 0; }
.rows { padding: 0 0 16px 29px; }
.row { display: flex; align-items: flex-start; margin-bottom: 5px; }
.type { height: 32px; align-items: center; margin-bottom: 9px; }
.ip { margin-bottom: 8px; }
.lab { width: 204px; display: flex; align-items: center; }
.in { padding-left: 16px; height: 18px; }
.help { width: 18px; height: 18px; }
.rad { width: 126px; display: flex; align-items: center; gap: 12px; }
.rad input { appearance: none; width: 17px; height: 17px; border: 2px solid #c9c9cb; border-radius: 50%; background: #fff; }
.rad input:checked { background: radial-gradient(circle, #a00000 3px, #fff 4px); }
textarea { width: 327px; height: 62px; padding: 3px 7px; border: 1px solid #b5b8bf; resize: none; color: #000; display: block; }
.row p { margin: 7px 0 0 3px; line-height: 17px; white-space: nowrap; }
.wide { width: 327px; height: 27px; border: 1px solid #b5b8bf; }
.box { appearance: none; width: 17px; height: 17px; border: 1px solid #b0b2b8; border-radius: 2px; background: #fff; flex: none; }
.box:disabled { border-color: #d3d3d5; }
.multi { display: flex; align-items: center; gap: 4px; height: 17px; margin-top: 18px; font-size: 16px; font-weight: bold; }
.form h3 { margin: 16px 0 15px; padding-left: 1px; font-size: 16px; line-height: 20px; }
.band { display: flex; align-items: flex-start; height: 29px; margin-bottom: 5px; padding-left: 18px; line-height: 28px; white-space: nowrap; }
.blab { width: 215px; line-height: 18px; }
.band input { width: 140px; height: 27px; border: 1px solid #b5b8bf; }
.unit { width: 89px; height: 28px; margin: 0 11px 0 9px; }
.range { width: 122px; }
.over { width: 125px; display: flex; align-items: center; line-height: 24px; }
.band .pct { width: 77px; border-color: #d5d5d5; background: #fcfcfc; margin-right: 7px; }
.sign { color: #aaa; }
.access { display: flex; align-items: flex-start; margin-top: 12px; padding-left: 6px; }
.acc-main { position: relative; width: 226px; height: 17px; display: flex; align-items: center; gap: 4px; }
.acc-main::after { content: ""; position: absolute; left: -12px; top: -18px; width: 139px; height: 50px; border: 4px solid #ff1f10; border-radius: 3px; }
.acc-list { display: grid; grid-template-columns: repeat(3, 100px); row-gap: 11px; color: #b0b0b0; }
.acc-list label { display: flex; align-items: center; gap: 4px; height: 17px; }
.adv { display: flex; align-items: center; gap: 7px; margin: 26px 0 0 8px; height: 18px; font-size: 16px; font-weight: bold; }
.scroll { width: 21px; display: flex; flex-direction: column; align-items: center; padding: 9px 0 8px; background: #f1f1f1; }
.scroll i { width: 17px; flex: 1; margin: 147px 0 7px; background: #c1c1c1; }
.dlg-foot { height: 58px; display: flex; justify-content: flex-end; gap: 12px; padding: 11px 24px 0; }
.dlg-foot button { width: 88px; height: 32px; font-size: 17px; border: 1px solid #a2a4a9; border-bottom-width: 2px; border-radius: 2px; background: linear-gradient(#ececec, #dadada 20%); }
```
